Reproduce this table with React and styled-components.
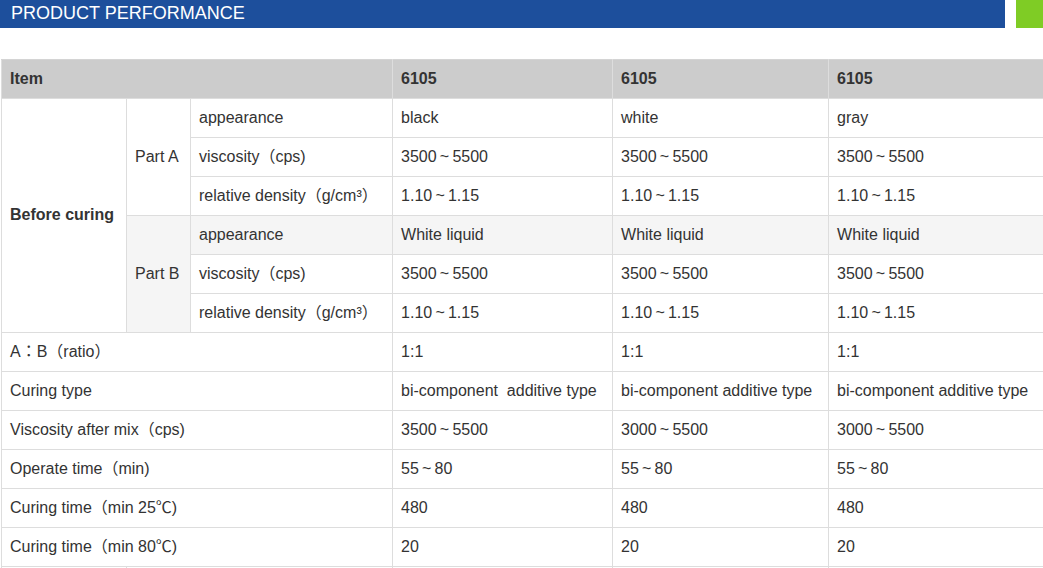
import React from "react";
import styled, { createGlobalStyle } from "styled-components";

const GlobalStyle = createGlobalStyle`
  html, body {
    margin: 0;
    padding: 0;
    background: #fff;
    overflow: hidden;
  }
  body {
    font-family: "Liberation Sans", "Noto Sans CJK TC", Arial, sans-serif;
    color: #333;
  }
`;

const Page = styled.div`
  width: 1043px;
  height: 568px;
  overflow: hidden;
`;

const TitleBar = styled.div`
  display: flex;
  height: 28px;
  gap: 11px;
`;

const TitleText = styled.h2`
  flex: 1;
  margin: 0;
  background: #1d4f9c;
  color: #fff;
  font-size: 18px;
  font-weight: normal;
  line-height: 27px;
  padding-left: 11px;
`;

const GreenTab = styled.div`
  width: 27px;
  background: #7fcc25;
`;

const TableWrap = styled.div`
  margin-top: 31px;
  padding-left: 1px;
`;

const Table = styled.table`
  border-collapse: collapse;
  table-layout: fixed;
  width: 1047px;
  font-size: 16px;
  line-height: 18px;
`;

const Row = styled.tr`
  background: ${p => (p.$shade ? "#f5f5f5" : "#fff")};
`;

const HeadRow = styled.tr`
  background: #cccccc;
`;

const Th = styled.th`
  height: 37px;
  border: 1px solid #dddddd;
  border-top-color: #d4d4d4;
  padding: 0 8px 1px;
  text-align: left;
  font-weight: bold;
  color: #333;
`;

const Td = styled.td`
  height: 37px;
  border: 1px solid #dddddd;
  padding: 0 8px 1px;
  text-align: left;
  vertical-align: middle;
  font-weight: ${p => (p.$bold ? "bold" : "normal")};
  background: ${p => (p.$shade ? "#f5f5f5" : "transparent")};
  white-space: nowrap;
`;

const models = ["6105", "6105", "6105"];

// range separator: a small tilde with thin spaces around it
const r = (a, b) => `${a}\u2009~\u2009${b}`;

const partRows = {
  A: [
    ["appearance", ["black", "white", "gray"]],
    ["viscosity（cps)", [r(3500, 5500), r(3500, 5500), r(3500, 5500)]],
    ["relative density（g/cm³）", [r("1.10", "1.15"), r("1.10", "1.15"), r("1.10", "1.15")]],
  ],
  B: [
    ["appearance", ["White liquid", "White liquid", "White liquid"]],
    ["viscosity（cps)", [r(3500, 5500), r(3500, 5500), r(3500, 5500)]],
    ["relative density（g/cm³）", [r("1.10", "1.15"), r("1.10", "1.15"), r("1.10", "1.15")]],
  ],
};

const mixRows = [
  ["A：B（ratio）", ["1:1", "1:1", "1:1"]],
  ["Curing type", ["bi-component\u00a0 additive type", "bi-component additive type", "bi-component additive type"]],
  ["Viscosity after mix（cps)", [r(3500, 5500), r(3000, 5500), r(3000, 5500)]],
  ["Operate time（min)", [r(55, 80), r(55, 80), r(55, 80)]],
  ["Curing time（min 25℃)", ["480", "480", "480"]],
  ["Curing time（min 80℃)", ["20", "20", "20"]],
];

export default function App() {
  return (
    <Page>
      <GlobalStyle />
      <TitleBar>
        <TitleText>PRODUCT PERFORMANCE</TitleText>
        <GreenTab />
      </TitleBar>
      <TableWrap>
        <Table>
          <colgroup>
            <col style={{ width: 125 }} />
            <col style={{ width: 64 }} />
            <col style={{ width: 202 }} />
            <col style={{ width: 220 }} />
            <col style={{ width: 216 }} />
            <col style={{ width: 220 }} />
          </colgroup>
          <tbody>
            <HeadRow>
              <Th colSpan={3}>Item</Th>
              {models.map((m, i) => (
                <Th key={i}>{m}</Th>
              ))}
            </HeadRow>
            {["A", "B"].map(part =>
              partRows[part].map(([label, vals], i) => {
                const shade = part === "B" && i === 0;
                return (
                  <Row key={part + i} $shade={shade}>
                    {part === "A" && i === 0 && (
                      <Td rowSpan={6} $bold>
                        Before curing
                      </Td>
                    )}
                    {i === 0 && (
                      <Td rowSpan={3} $shade={part === "B"}>
                        Part {part}
                      </Td>
                    )}
                    <Td>{label}</Td>
                    {vals.map((v, j) => (
                      <Td key={j}>{v}</Td>
                    ))}
                  </Row>
                );
              })
            )}
            {mixRows.map(([label, vals], i) => (
              <Row key={"m" + i}>
                <Td colSpan={3}>{label}</Td>
                {vals.map((v, j) => (
                  <Td key={j}>{v}</Td>
                ))}
              </Row>
            ))}
            <Row>
              <Td rowSpan={2} />
              <Td colSpan={2} />
              <Td />
              <Td />
              <Td />
            </Row>
          </tbody>
        </Table>
      </TableWrap>
    </Page>
  );
}
